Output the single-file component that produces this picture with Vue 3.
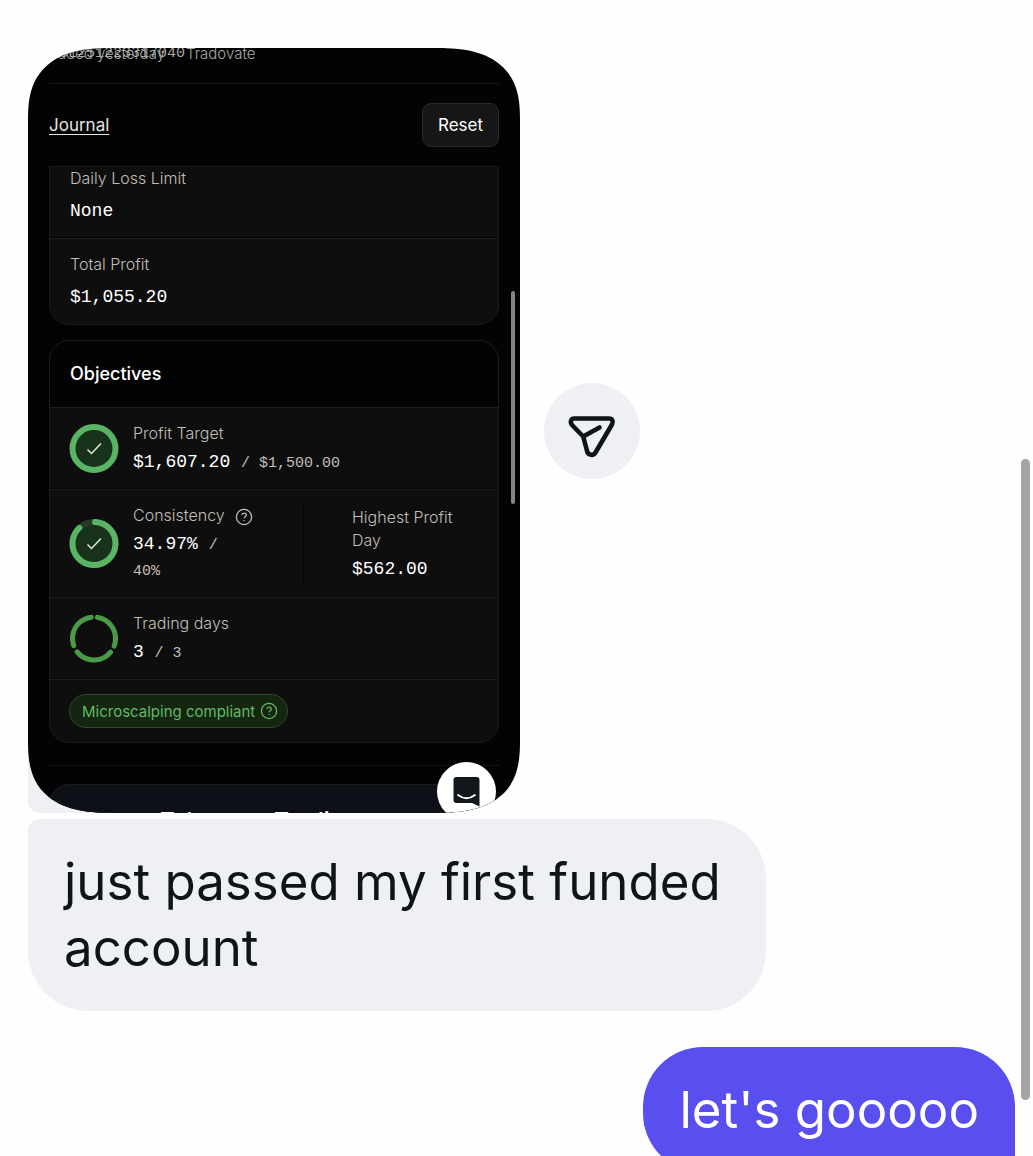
<script setup>
const limits = [
  { label: 'Daily Loss Limit', value: 'None' },
  { label: 'Total Profit', value: '$1,055.20' },
]
</script>

<template>
  <main class="chat">
    <div class="attachment">
      <div class="frame">
        <section class="phone">
          <div class="account">
            <span class="stack">
              <span class="id">Y3L251223317040</span>
              <span class="when">Traded yesterday</span>
            </span>
            <span>Tradovate</span>
          </div>

          <header class="toolbar">
            <a class="journal" href="#journal">Journal</a>
            <button class="reset" type="button">Reset</button>
          </header>

          <div class="card limits">
            <div v-for="item in limits" :key="item.label" class="limit">
              <div class="label">{{ item.label }}</div>
              <div class="value">{{ item.value }}</div>
            </div>
          </div>

          <div class="card objectives">
            <h2 class="title">Objectives</h2>

            <div class="row">
              <svg class="ring" viewBox="0 0 50 50" aria-hidden="true">
                <circle cx="25" cy="24.500" r="21.500" fill="#18321c" stroke="#59b564" stroke-width="6" />
                <path d="M18.5 25.500l4 4 9.5-10" fill="none" stroke="#dfe8df" stroke-width="1.500" />
              </svg>
              <div class="info">
                <div class="label">Profit Target</div>
                <div class="value">$1,607.20 <span class="target">/ $1,500.00</span></div>
              </div>
            </div>

            <div class="row">
              <svg class="ring" viewBox="0 0 50 50" aria-hidden="true">
                <circle cx="25" cy="24.500" r="21.500" fill="#18321c" stroke="#263a29" stroke-width="6" />
                <circle
                  cx="25" cy="24.500" r="21.500" fill="none" stroke="#59b564" stroke-width="6"
                  stroke-linecap="round" stroke-dasharray="117 20" transform="rotate(-87 25 24.500)"
                />
                <path d="M18.5 25.500l4 4 9.5-10" fill="none" stroke="#dfe8df" stroke-width="1.500" />
              </svg>
              <div class="info split">
                <div class="label">
                  Consistency
                  <svg class="help" viewBox="0 0 18 18" aria-hidden="true">
                    <circle cx="9" cy="9" r="7.600" />
                    <path d="M6.800 7.200c.2-1.300 1.100-2 2.300-2 1.300 0 2.200.8 2.200 1.900 0 1.500-2.100 1.600-2.100 3.100" />
                    <path d="M9.200 12v1.100" />
                  </svg>
                </div>
                <div class="value">34.97% <span class="target">/</span></div>
                <div class="value"><span class="target">40%</span></div>
              </div>
              <div class="info aside">
                <div class="label">Highest Profit Day</div>
                <div class="value">$562.00</div>
              </div>
            </div>

            <div class="row">
              <svg class="ring" viewBox="0 0 50 50" aria-hidden="true">
                <circle
                  cx="25" cy="24.500" r="21.500" fill="none" stroke="#4a9a48" stroke-width="5"
                  stroke-linecap="round" stroke-dasharray="38 7.029" transform="rotate(-81 25 24.500)"
                />
              </svg>
              <div class="info">
                <div class="label">Trading days</div>
                <div class="value">3 <span class="target">/ 3</span></div>
              </div>
            </div>

            <div class="row">
              <span class="pill">
                Microscalping compliant
                <svg class="help" viewBox="0 0 18 18" aria-hidden="true">
                  <circle cx="9" cy="9" r="7.600" />
                  <path d="M6.800 7.200c.2-1.300 1.100-2 2.300-2 1.300 0 2.200.8 2.200 1.900 0 1.500-2.100 1.600-2.100 3.100" />
                  <path d="M9.200 12v1.100" />
                </svg>
              </span>
            </div>
          </div>

          <hr class="rule" />
          <div class="card promo">Take your Trading</div>

          <span class="thumb"></span>
          <button class="messenger" type="button" aria-label="Open messenger">
            <svg viewBox="0 0 59 59" aria-hidden="true">
              <path d="M19.500 15h20a3 3 0 0 1 3 3v26.500L35 41H19.500a3 3 0 0 1-3-3V18a3 3 0 0 1 3-3z" fill="#12171b" />
              <path d="M21 33q8.500 6.500 17 0" fill="none" stroke="#fff" stroke-width="1.800" stroke-linecap="round" />
            </svg>
          </button>
        </section>
      </div>

      <button class="share" type="button" aria-label="Share">
        <svg viewBox="14 13 96 96" aria-hidden="true">
          <path
            d="M44 48.500H79C82.500 48.500 83.500 51.500 82 54.500L65.500 82.500C63.500 86 58.200 85.500 57.200 81.500L53.200 66.500L42.500 55.500C39.500 52.500 41 48.500 44 48.500zM53.200 66.500L69.500 57.500"
            fill="none" stroke="#0f1419" stroke-width="4.600" stroke-linecap="round" stroke-linejoin="round"
          />
        </svg>
      </button>
    </div>

    <p class="bubble received">just passed my first funded account</p>
    <p class="bubble sent">let's gooooo</p>
    <span class="scrollbar"></span>
  </main>
</template>

<style>
body {
  margin: 0;
  background: #fefefe;
}
</style>

<style scoped>
.chat {
  position: relative;
  box-sizing: border-box;
  height: 100vh;
  overflow: hidden;
  padding: 48px 18px 0 28px;
  display: flex;
  flex-direction: column;
  align-items: flex-start;
  font-family: Inter, "Liberation Sans", sans-serif;
}
.attachment {
  flex: none;
  display: flex;
  align-items: center;
  gap: 24px;
}
.frame {
  background: linear-gradient(#eff0f4, #eff0f4) left bottom / 100px 100px no-repeat;
  border-bottom-left-radius: 12px;
}
.phone {
  position: relative;
  box-sizing: border-box;
  width: 492px;
  height: 765px;
  padding: 0 21px;
  overflow: hidden;
  background: #030303;
  border-radius: 86px / 72px;
  corner-shape: superellipse(1.4);
  color: #fff;
  font-size: 16px;
}
.account {
  display: flex;
  gap: 1px;
  height: 35px;
  border-bottom: 1px solid #161616;
  color: #a8a8a8;
  font-size: 15px;
  font-weight: 300;
  line-height: 12px;
}
.stack {
  display: grid;
  grid-template-columns: 100%;
  width: 136px;
  justify-items: end;
}
.stack span {
  grid-area: 1 / 1;
  white-space: nowrap;
}
.id {
  font-family: "Liberation Mono", monospace;
}
.when {
  padding-right: 20px;
}
.toolbar {
  display: flex;
  align-items: center;
  justify-content: space-between;
  height: 82px;
}
.journal {
  color: #e4e4e4;
  font-size: 17px;
  text-decoration: underline;
  text-underline-offset: 3px;
}
.reset {
  height: 44px;
  padding: 0 15px;
  background: #161616;
  border: 1px solid #2a2a2a;
  border-radius: 9px;
  color: #fff;
  font: 400 17px Inter, sans-serif;
}
.card {
  background: #0e0e0e;
  border: 1px solid #1b1b1b;
  border-radius: 20px;
}
.limits {
  margin-bottom: 15px;
  border-radius: 0 0 20px 20px;
}
.limit {
  padding: 14px 20px;
}
.limit:first-child {
  padding-top: 0;
}
.limit .value {
  margin-top: 8px;
}
.limit + .limit,
.row {
  border-top: 1px solid #1e1e1e;
  box-shadow: 0 -1px 0 #030303;
}
.title {
  margin: 0;
  padding: 0 20px;
  background: #030303;
  border-radius: 20px 20px 0 0;
  font-size: 18px;
  font-weight: 500;
  line-height: 66px;
}
.row {
  display: flex;
  align-items: center;
  padding: 14px 19px;
}
.ring {
  flex: none;
  width: 50px;
  height: 50px;
  margin-right: 14px;
}
.label {
  color: #c2beb9;
  font-weight: 300;
  line-height: 23px;
}
.value {
  margin-top: 4px;
  font-family: "Liberation Mono", monospace;
  font-size: 18px;
  line-height: 26px;
}
.value + .value {
  margin-top: 0;
}
.target {
  color: #c2beb9;
  font-size: 15px;
  line-height: 16px;
}
.split {
  flex: 1;
}
.aside {
  box-sizing: border-box;
  width: 176px;
  padding-left: 48px;
  border-left: 1px solid #030303;
}
.help {
  width: 18px;
  height: 18px;
  fill: none;
  stroke: currentColor;
  stroke-width: 1.3;
}
.label .help {
  margin: -4px 0 -4px 6px;
  vertical-align: -1px;
}
.pill {
  display: flex;
  align-items: center;
  gap: 5px;
  box-sizing: border-box;
  height: 34px;
  padding: 0 9px 0 12px;
  background: #14260f;
  border: 1px solid #2d4a2a;
  border-radius: 17px;
  color: #62b866;
  font-size: 15px;
}
.rule {
  margin: 22px 0 18px;
  border: 0;
  border-top: 1px solid #141414;
}
.promo {
  padding: 20px 110px 0;
  background: #0d1117;
  font-size: 23px;
  font-weight: 500;
  line-height: 32px;
  white-space: nowrap;
}
.thumb {
  position: absolute;
  top: 243px;
  right: 5px;
  width: 4px;
  height: 213px;
  border-radius: 2px;
  background: #858585;
}
.messenger {
  position: absolute;
  right: 24px;
  bottom: -8px;
  width: 59px;
  height: 59px;
  padding: 0;
  border: 0;
  border-radius: 50%;
  background: #fff;
}
.messenger svg,
.share svg {
  display: block;
  width: 100%;
}
.share {
  width: 96px;
  height: 96px;
  padding: 0;
  border: 0;
  border-radius: 50%;
  background: #eff0f4;
}
.bubble {
  flex: none;
  box-sizing: border-box;
  max-width: min(738px, 100%);
  margin: 0;
  padding: 30px 36px;
  font-size: 51px;
  line-height: 66px;
}
.received {
  margin-top: 6px;
  background: #eff0f4;
  border-radius: 12px 60px 60px 60px;
  color: #0f1419;
}
.sent {
  align-self: flex-end;
  margin-top: 36px;
  background: #584fee;
  border-radius: 60px 60px 12px 60px;
  color: #fff;
}
.scrollbar {
  position: absolute;
  top: 459px;
  right: 3px;
  width: 9px;
  height: 641px;
  border-radius: 5px;
  background: #a5a5a5;
}
</style>
